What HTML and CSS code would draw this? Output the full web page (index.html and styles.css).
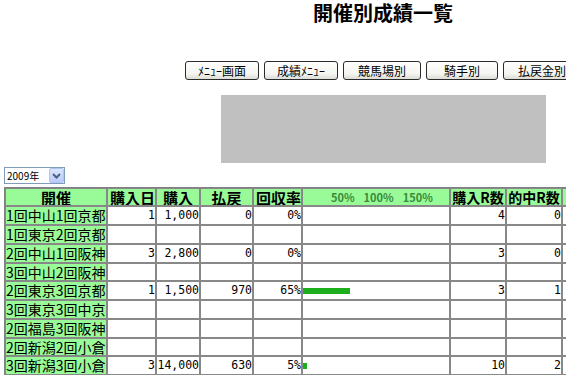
FILE: index.html
```html
<!DOCTYPE html>
<html lang="ja">
<head>
    <meta charset="UTF-8">
    <title>開催別成績一覧</title>
    <link rel="stylesheet" href="styles.css">
</head>
<body>

<div class="page">
    <h1 class="title">開催別成績一覧</h1>

    <div class="menu">
        <button class="menu-btn kana">ﾒﾆｭｰ画面</button>
        <button class="menu-btn kana">成績ﾒﾆｭｰ</button>
        <button class="menu-btn">競馬場別</button>
        <button class="menu-btn short">騎手別</button>
        <button class="menu-btn">払戻金別</button>
    </div>

    <div class="banner"></div>

    <form class="year-form">
        <span class="year-select">
            <select name="year">
                <option>2009年</option>
                <option>2008年</option>
            </select>
            <span class="year-arrow">
                <svg width="9" height="6" viewBox="0 0 9 6"><path d="M1 1 L4.5 4.5 L8 1" fill="none" stroke="#4d6185" stroke-width="2"/></svg>
            </span>
        </span>
    </form>

    <table class="results">
        <thead>
            <tr>
                <th class="c-name">開催</th>
                <th class="c-day">購入日</th>
                <th class="c-buy">購入</th>
                <th class="c-pay">払戻</th>
                <th class="c-rate">回収率</th>
                <th class="c-bar"><span class="scale">50%</span><span class="scale">100%</span><span class="scale">150%</span></th>
                <th class="c-race">購入R数</th>
                <th class="c-race">的中R数</th>
                <th class="c-more">的中率</th>
            </tr>
        </thead>
        <tbody>
            <tr>
                <td class="name">1回中山1回京都</td>
                <td class="num">1</td><td class="num">1,000</td><td class="num">0</td><td class="num">0%</td>
                <td class="bar-cell"></td>
                <td class="num">4</td><td class="num">0</td><td class="num">0%</td>
            </tr>
            <tr>
                <td class="name">1回東京2回京都</td>
                <td></td><td></td><td></td><td></td><td class="bar-cell"></td><td></td><td></td><td></td>
            </tr>
            <tr>
                <td class="name">2回中山1回阪神</td>
                <td class="num">3</td><td class="num">2,800</td><td class="num">0</td><td class="num">0%</td>
                <td class="bar-cell"></td>
                <td class="num">3</td><td class="num">0</td><td class="num">0%</td>
            </tr>
            <tr>
                <td class="name">3回中山2回阪神</td>
                <td></td><td></td><td></td><td></td><td class="bar-cell"></td><td></td><td></td><td></td>
            </tr>
            <tr>
                <td class="name">2回東京3回京都</td>
                <td class="num">1</td><td class="num">1,500</td><td class="num">970</td><td class="num">65%</td>
                <td class="bar-cell"><div class="bar" style="width: 47px"></div></td>
                <td class="num">3</td><td class="num">1</td><td class="num">33%</td>
            </tr>
            <tr>
                <td class="name">3回東京3回中京</td>
                <td></td><td></td><td></td><td></td><td class="bar-cell"></td><td></td><td></td><td></td>
            </tr>
            <tr>
                <td class="name">2回福島3回阪神</td>
                <td></td><td></td><td></td><td></td><td class="bar-cell"></td><td></td><td></td><td></td>
            </tr>
            <tr>
                <td class="name">2回新潟2回小倉</td>
                <td></td><td></td><td></td><td></td><td class="bar-cell"></td><td></td><td></td><td></td>
            </tr>
            <tr>
                <td class="name">3回新潟3回小倉</td>
                <td class="num">3</td><td class="num">14,000</td><td class="num">630</td><td class="num">5%</td>
                <td class="bar-cell"><div class="bar" style="width: 4px"></div></td>
                <td class="num">10</td><td class="num">2</td><td class="num">20%</td>
            </tr>
        </tbody>
    </table>
</div>

</body>
</html>
```

FILE: styles.css
```css
html {
    overflow: hidden;
}

body {
    margin: 0;
    font-family: "Noto Sans CJK JP", "Noto Sans", sans-serif;
    background-color: white;
    color: black;
}

.page {
    width: 758px;
    padding: 0 4px;
}

.title {
    margin: 0;
    padding-top: 2px;
    font-size: 20px;
    line-height: 22px;
    font-weight: bold;
    text-align: center;
}

.menu {
    display: flex;
    justify-content: center;
    gap: 5px;
    margin-top: 37px;
}

.menu-btn {
    height: 19px;
    padding: 0 14px;
    font-family: inherit;
    font-size: 12px;
    line-height: 15px;
    color: black;
    background: linear-gradient(#ffffff, #f4f4f0 70%, #dcdcd6);
    border: 1px solid #2b2b2b;
    border-radius: 3px;
}

.menu-btn.kana {
    padding: 0 12px;
}

.menu-btn.short {
    padding: 0 17px;
}

.banner {
    width: 325px;
    height: 68px;
    margin: 15px auto 0;
    background-color: #c0c0c0;
}

.year-form {
    display: flex;
    margin: 4px 0 0;
}

.year-select {
    display: flex;
    height: 15px;
    border: 1px solid #7f9db9;
    background-color: white;
}

.year-select select {
    appearance: none;
    width: 44px;
    padding: 0 0 0 2px;
    border: none;
    background: transparent;
    font-family: inherit;
    font-size: 10px;
    line-height: 15px;
    color: black;
}

.year-arrow {
    display: flex;
    align-items: center;
    justify-content: center;
    width: 15px;
    background: linear-gradient(#dbe6fe, #b9cbf9);
    border: 1px solid #b0c4f4;
    border-radius: 2px;
    box-sizing: border-box;
}

.results {
    margin-top: 3px;
    table-layout: fixed;
    width: 621px;
    border-collapse: separate;
    border-spacing: 0;
    border: 1px solid #808080;
}

.results th,
.results td {
    box-sizing: border-box;
    border: 1px solid #888888;
    padding: 0 2px;
    white-space: nowrap;
    overflow: hidden;
    vertical-align: middle;
}

.results th {
    height: 18px;
    background-color: palegreen;
    font-size: 15px;
    line-height: 15px;
    font-weight: bold;
    text-align: center;
}

.results th.c-race {
    padding: 0;
    font-size: 14px;
}

.results td {
    height: 19px;
    font-size: 14px;
    line-height: 15px;
}

.results tbody tr:nth-child(4n) td {
    height: 18px;
}

.c-name { width: 102px; }
.c-day { width: 49px; }
.c-buy { width: 44px; }
.c-pay { width: 53px; }
.c-rate { width: 49px; }
.c-bar { width: 148px; }
.c-race { width: 56px; }
.c-more { width: 62px; }

.results th.c-bar {
    padding: 0 0 0 28px;
    text-align: left;
    font-size: 11px;
    font-weight: bold;
    color: #3b8a3b;
}

.scale {
    margin-right: 9px;
}

.results td.name {
    background-color: palegreen;
    padding: 0;
}

.results td.num {
    padding: 0;
    text-align: right;
    font-family: "DejaVu Sans Mono", monospace;
    font-size: 11.5px;
}

.results td.bar-cell {
    padding: 0;
}

.bar {
    height: 6px;
    background-color: #1cae1c;
}
```
